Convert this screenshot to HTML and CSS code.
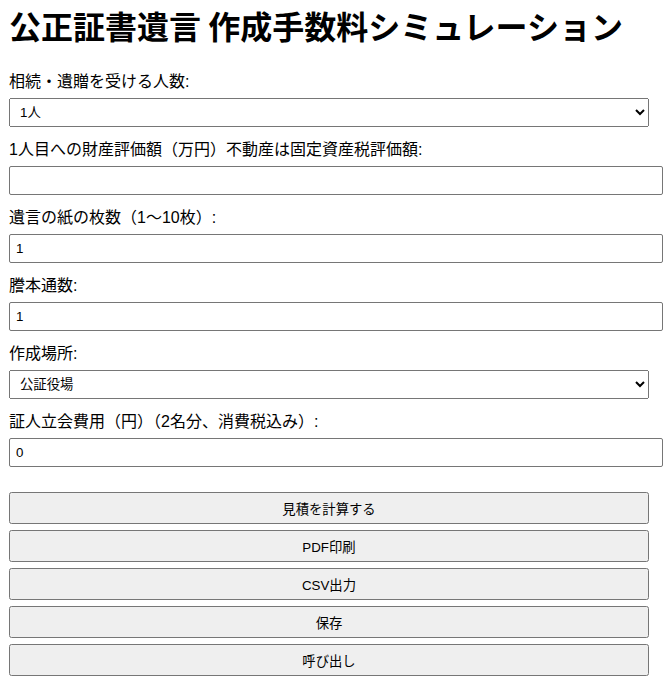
FILE: index.html
```html
<!DOCTYPE html>
<html lang="ja">
<head>
<meta charset="utf-8">
<title>公正証書遺言 作成手数料シミュレーション</title>
<link rel="stylesheet" href="styles.css">
</head>
<body>
<div class="page">
  <h1 class="title">公正証書遺言 作成手数料シミュレーション</h1>
  <form class="form">
    <label class="label" for="heirs">相続・遺贈を受ける人数:</label>
    <select class="select" id="heirs">
      <option>1人</option>
      <option>2人</option>
      <option>3人</option>
    </select>

    <label class="label" for="value1">1人目への財産評価額（万円）不動産は固定資産税評価額:</label>
    <input class="input" id="value1" type="text">

    <label class="label" for="pages">遺言の紙の枚数（1〜10枚）:</label>
    <input class="input" id="pages" type="text" value="1">

    <label class="label" for="copies">謄本通数:</label>
    <input class="input" id="copies" type="text" value="1">

    <label class="label" for="place">作成場所:</label>
    <select class="select" id="place">
      <option>公証役場</option>
      <option>出張</option>
    </select>

    <label class="label" for="witness">証人立会費用（円）（2名分、消費税込み）:</label>
    <input class="input" id="witness" type="text" value="0">

    <div class="actions">
      <button class="btn" type="button">見積を計算する</button>
      <button class="btn" type="button">PDF印刷</button>
      <button class="btn" type="button">CSV出力</button>
      <button class="btn" type="button">保存</button>
      <button class="btn" type="button">呼び出し</button>
    </div>
  </form>
</div>
</body>
</html>
```
FILE: styles.css
```css
html, body {
  margin: 0;
  padding: 0;
  background: #ffffff;
}
body {
  font-family: "Liberation Sans", "Noto Sans CJK JP", sans-serif;
  color: #000000;
}
.page {
  width: 640px;
  padding: 2px 9px 0;
}
.title {
  font-family: "Noto Sans CJK JP", sans-serif;
  font-size: 32px;
  font-weight: bold;
  margin: 0 0 22px;
  white-space: nowrap;
}
.form {
  display: block;
}
.label {
  display: block;
  font-size: 16px;
  line-height: 23px;
  margin: 11px 0 5px;
}
.label:first-child {
  margin-top: 0;
}
.select {
  display: block;
  width: 100%;
  height: 29px;
  box-sizing: border-box;
  padding: 0 6px;
  font-family: "Liberation Sans", "Noto Sans CJK JP", sans-serif;
  font-size: 13.333px;
}
.input {
  display: block;
  width: 100%;
  height: 15px;
  line-height: 15px;
  box-sizing: content-box;
  padding: 6px;
  font-family: "Liberation Sans", "Noto Sans CJK JP", sans-serif;
  font-size: 13.333px;
  border: 1px solid #767676;
  border-radius: 2px;
  margin: 0;
}
.actions {
  display: flex;
  flex-direction: column;
  gap: 6px;
  margin-top: 25px;
}
.btn {
  width: 100%;
  height: 32px;
  box-sizing: border-box;
  padding: 0 6px;
  font-family: "Liberation Sans", "Noto Sans CJK JP", sans-serif;
  font-size: 13.333px;
  margin: 0;
}
```
